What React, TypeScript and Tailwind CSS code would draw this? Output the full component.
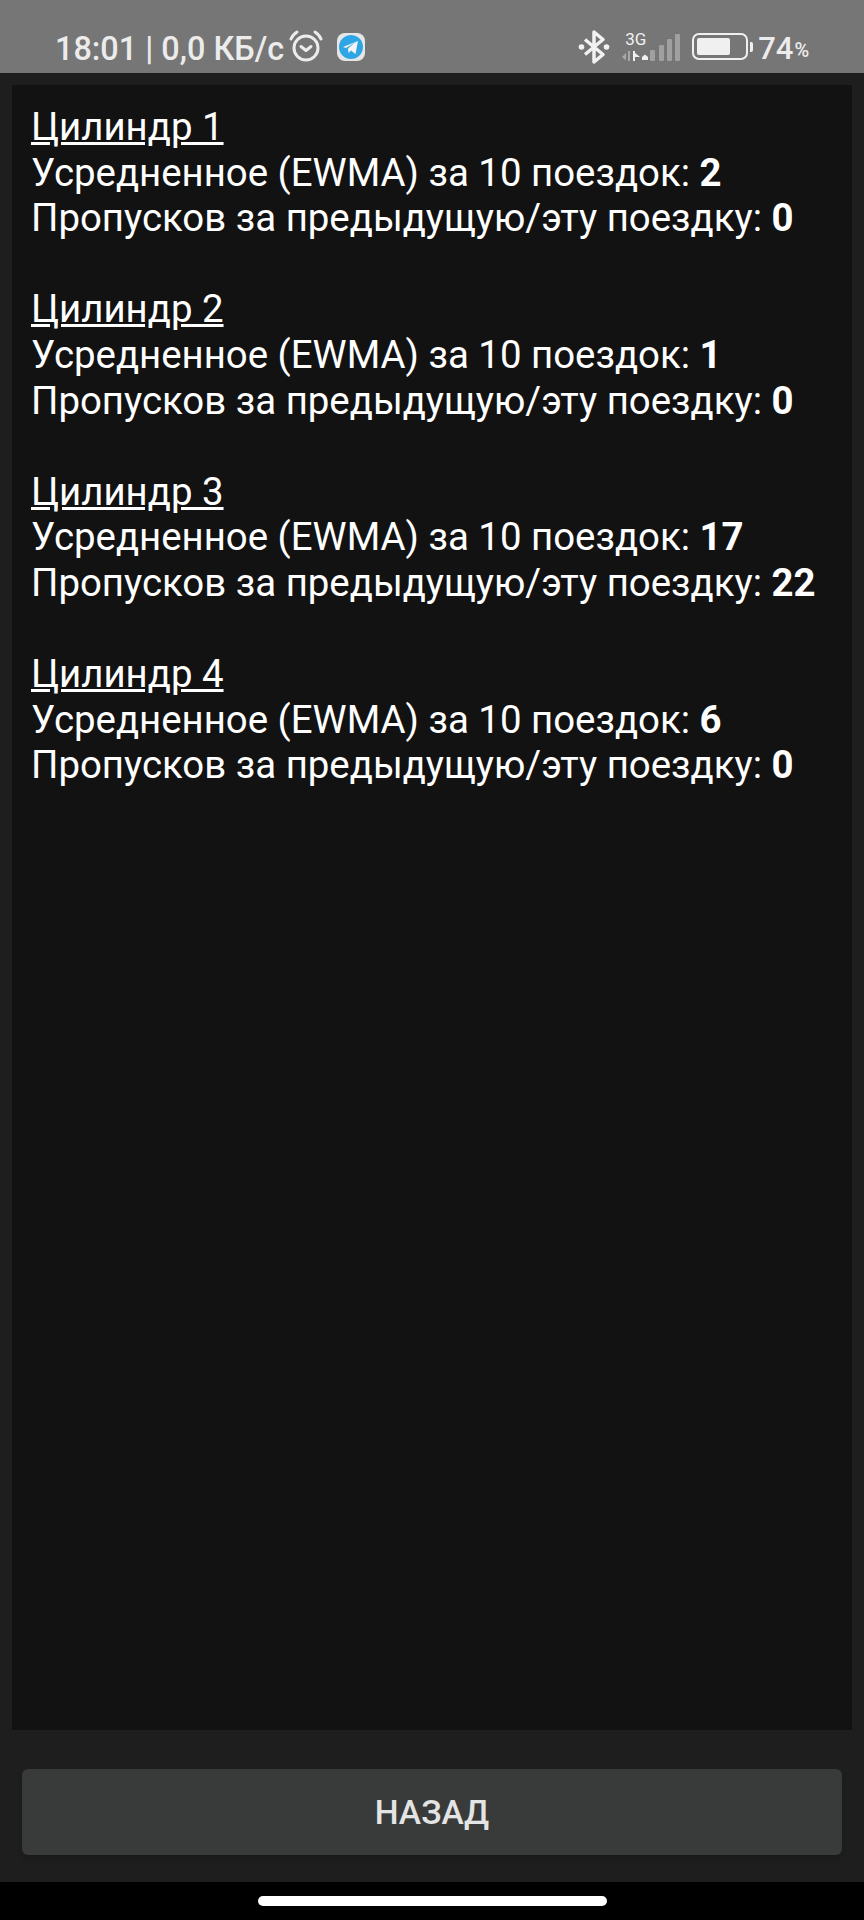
const cylinders = [
  { name: 'Цилиндр 1', ewma: '2', misses: '0' },
  { name: 'Цилиндр 2', ewma: '1', misses: '0' },
  { name: 'Цилиндр 3', ewma: '17', misses: '22' },
  { name: 'Цилиндр 4', ewma: '6', misses: '0' },
];

const AlarmIcon = () => (
  <svg width="34" height="32" viewBox="0 0 34 32" fill="none" stroke="#ececec" strokeWidth="3">
    <circle cx="17" cy="18" r="12" />
    <path d="M12 16.5l5 4 5-4" strokeLinecap="round" strokeLinejoin="round" />
    <path d="M2 9c1-3 3-5 6-7M32 9c-1-3-3-5-6-7" strokeLinecap="round" />
  </svg>
);

const TelegramIcon = () => (
  <svg width="28" height="28" viewBox="0 0 28 28">
    <rect width="28" height="28" rx="8" fill="#e6e6e6" />
    <circle cx="14" cy="14" r="12" fill="#2ea6e6" />
    <path d="M6 14l15-6-2.5 13-4.5-3.5-2.5 2.5-.5-4.5 7-6-9 5.5z" fill="#f4f4f4" />
  </svg>
);

const BluetoothIcon = () => (
  <svg width="32" height="34" viewBox="0 0 32 34" fill="none">
    <path d="M7 9.5l18 15L16 32V2l9 7.500L7 24.500" stroke="#f2f2f2" strokeWidth="3.500" strokeLinejoin="round" />
    <circle cx="3.500" cy="17" r="2.800" fill="#f2f2f2" />
    <circle cx="28.500" cy="17" r="2.800" fill="#f2f2f2" />
  </svg>
);

const SignalIcon = () => (
  <svg width="60" height="28" viewBox="0 0 60 28">
    <path d="M5 20l-4 4 4 3.500zM7 18h2v10H7z" fill="#a8a8a8" />
    <path d="M12 18h2v2l5 4h-5v4h-2z" fill="#f0f0f0" />
    <path d="M21 27v-3l3-2.500 3 2.500v3z" fill="#f0f0f0" />
    <rect x="29" y="17" width="5" height="11" rx="1" fill="#a0a0a0" />
    <rect x="38" y="12" width="5" height="16" rx="1" fill="#a0a0a0" />
    <rect x="46" y="6" width="5" height="22" rx="1" fill="#a0a0a0" />
    <rect x="54" y="1" width="5" height="27" rx="1" fill="#a0a0a0" />
  </svg>
);

const BatteryIcon = () => (
  <div className="flex items-center gap-[2px]">
    <div className="w-[56px] h-[27px] rounded-[7px] border-[2px] border-[#f0f0f0] p-[3px]">
      <div className="w-[33px] h-full rounded-[2px] bg-[#f0f0f0]" />
    </div>
    <div className="w-[3px] h-[10px] rounded-r-[2px] bg-[#f0f0f0]" />
  </div>
);

export default function App() {
  return (
    <div className="w-[864px] h-[1920px] flex flex-col bg-[#1e1e1e] overflow-hidden font-['Roboto',sans-serif]">
      {/* Status bar */}
      <div className="h-[73px] shrink-0 bg-[#767676] flex items-start text-[#ececec]">
        <span className="ml-[55px] mt-[29px] text-[32.4px] leading-[40px] font-medium whitespace-nowrap">18:01 | 0,0 КБ/с</span>
        <div className="ml-[5px] mt-[30px]"><AlarmIcon /></div>
        <div className="ml-[14px] mt-[33px]"><TelegramIcon /></div>
        <div className="ml-[213px] mt-[30px]"><BluetoothIcon /></div>
        <div className="relative ml-[11px] mt-[33px]">
          <SignalIcon />
          <span className="absolute left-[4px] -top-[2px] text-[17px] leading-[16px] text-[#f0f0f0]">3G</span>
        </div>
        <div className="ml-[11px] mt-[33px]"><BatteryIcon /></div>
        <span className="ml-[5px] mt-[29px] text-[31px] leading-[40px] font-medium whitespace-nowrap">74</span>
        <span className="ml-[1px] mt-[38px] text-[20px] leading-[24px] font-medium">%</span>
      </div>

      {/* Cylinder stats */}
      <div className="mx-[12px] mt-[12px] h-[1645px] shrink-0 bg-[#121212] px-[19px] pt-[19px] text-white text-[38.4px] leading-[45.6px]">
        {cylinders.map((cyl) => (
          <div key={cyl.name} className="mb-[45.6px]">
            <div className="underline">{cyl.name}</div>
            <div className="whitespace-nowrap">Усредненное (EWMA) за 10 поездок: <b>{cyl.ewma}</b></div>
            <div className="whitespace-nowrap">Пропусков за предыдущую/эту поездку: <b>{cyl.misses}</b></div>
          </div>
        ))}
      </div>

      {/* Back button */}
      <div className="flex-1 px-[22px] pt-[39px]">
        <button className="w-full h-[86px] pt-[2px] rounded-[6px] bg-[#393b3a] text-[#e4e4e4] text-[33.6px] font-medium shadow-md">
          НАЗАД
        </button>
      </div>

      {/* Nav bar */}
      <div className="h-[38px] shrink-0 bg-black flex justify-center pt-[14px]">
        <div className="w-[349px] h-[10px] rounded-full bg-white" />
      </div>
    </div>
  );
}
